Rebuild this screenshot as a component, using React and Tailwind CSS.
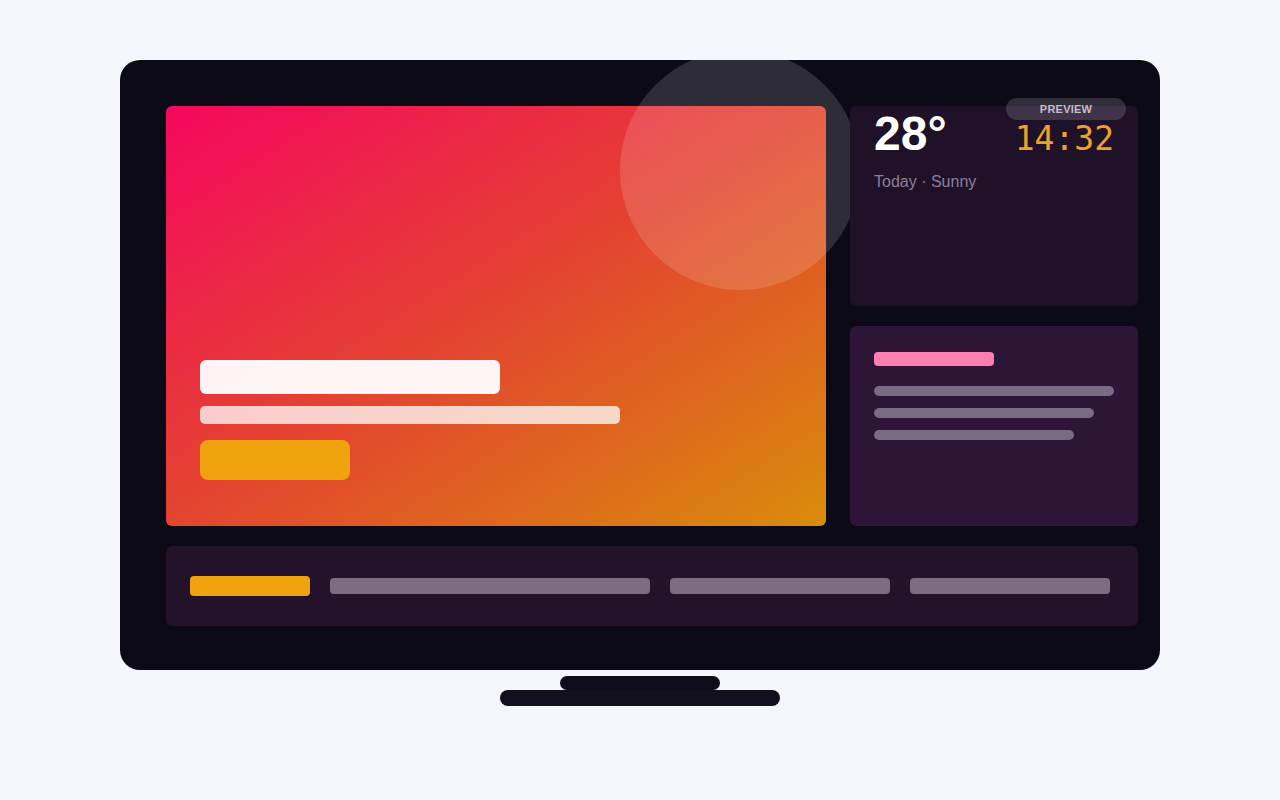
import React from 'react';

const sans = { fontFamily: '"Liberation Sans", Arial, sans-serif' };

export default function App() {
  return (
    <div className="min-h-[800px] w-full bg-[#f5f5fc] flex flex-col items-center pt-[60px]" style={sans}>
      {/* TV frame */}
      <div className="relative w-[1040px] h-[610px] rounded-[20px] bg-[#0c0a17] overflow-hidden pt-[46px] pl-[46px] pr-[22px]">
        {/* glow circle */}
        <div className="absolute left-[500px] top-[-10px] w-[240px] h-[240px] rounded-full bg-white/[0.14] z-10" />

        {/* preview badge */}
        <div className="absolute right-[34px] top-[38px] w-[120px] h-[22px] rounded-full bg-white/[0.15] flex items-center justify-center text-[11px] font-bold tracking-[0.02em] text-[#c3bccb] z-30">
          PREVIEW
        </div>

        <div className="flex gap-6">
          {/* hero */}
          <div className="w-[660px] h-[420px] rounded-md bg-[linear-gradient(to_bottom_right,#f5075e_0%,#e3452f_50%,#d98c0b_100%)] flex flex-col justify-end px-[34px] pb-[46px]">
            <div className="w-[300px] h-[34px] rounded-md bg-white/95" />
            <div className="w-[420px] h-[18px] rounded-[5px] bg-white/75 mt-3" />
            <div className="w-[150px] h-[40px] rounded-lg bg-[#f0a20f] mt-4" />
          </div>

          {/* right column */}
          <div className="relative z-20 w-[288px] flex flex-col gap-5">
            <div className="h-[200px] rounded-md bg-[#1f1228] px-6 pt-1">
              <div className="flex items-baseline justify-between">
                <span className="text-[48px] leading-none font-bold text-white">28°</span>
                <span
                  className="text-[33px] leading-none text-[#f0a128]"
                  style={{ fontFamily: '"DejaVu Sans Mono", monospace' }}
                >
                  14:32
                </span>
              </div>
              <div className="mt-3 text-[16px] leading-6 text-[#8d7f9a]">Today · Sunny</div>
            </div>

            <div className="h-[200px] rounded-md bg-[#2d1538] px-6 pt-[26px]">
              <div className="w-[120px] h-[14px] rounded bg-[#ff7eb0]" />
              <div className="mt-5 flex flex-col gap-3">
                <div className="w-[240px] h-[10px] rounded-full bg-[#7b6a84]" />
                <div className="w-[220px] h-[10px] rounded-full bg-[#7b6a84]" />
                <div className="w-[200px] h-[10px] rounded-full bg-[#7b6a84]" />
              </div>
            </div>
          </div>
        </div>

        {/* bottom bar */}
        <div className="mt-5 h-[80px] rounded-md bg-[#24112a] flex items-center gap-5 px-6">
          <div className="w-[120px] h-[20px] rounded bg-[#f0a20f]" />
          <div className="w-[320px] h-[16px] rounded bg-[#7d6d82]" />
          <div className="w-[220px] h-[16px] rounded bg-[#7d6d82]" />
          <div className="w-[200px] h-[16px] rounded bg-[#7d6d82]" />
        </div>
      </div>

      {/* stand */}
      <div className="mt-[6px] w-[160px] h-[14px] rounded-full bg-[#0f0d1a]" />
      <div className="w-[280px] h-[16px] rounded-full bg-[#12101e]" />
    </div>
  );
}
